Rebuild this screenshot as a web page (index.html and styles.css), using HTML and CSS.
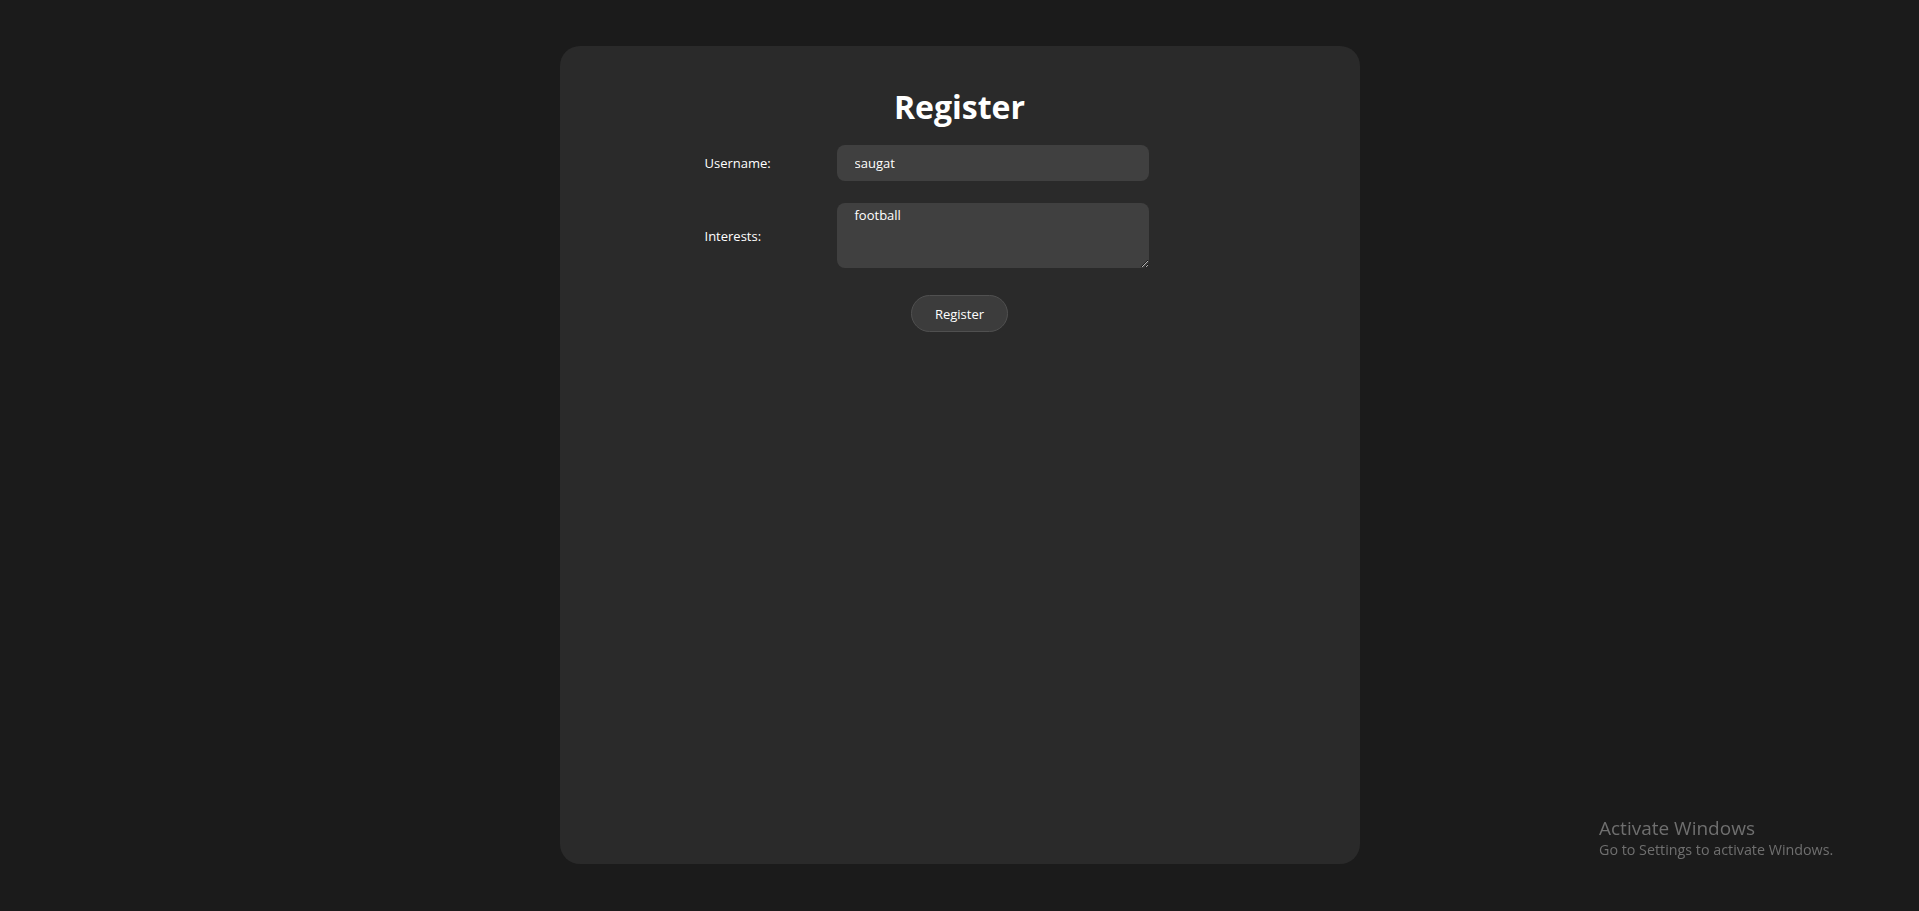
FILE: index.html
```html
<!DOCTYPE html>
<html lang="en">

<head>
    <meta charset="UTF-8">
    <meta name="viewport" content="width=device-width, initial-scale=1.0">
    <title>Register</title>
    <link rel="stylesheet" href="styles.css">
</head>

<body>
    <div class="container">
        <h1>Register</h1>

        <form class="register-form">
            <label for="username">Username:</label>
            <input type="text" id="username" name="username" value="saugat">

            <label for="interests">Interests:</label>
            <textarea id="interests" name="interests">football</textarea>

            <button type="submit">Register</button>
        </form>
    </div>

    <div class="activate">
        <div class="activate-title">Activate Windows</div>
        <div class="activate-text">Go to Settings to activate Windows.</div>
    </div>
</body>

</html>
```

FILE: styles.css
```css
body {
    font-family: 'Segoe UI', 'Open Sans', sans-serif;
    background-color: #1b1b1b;
    color: #ffffff;
    margin: 0;
    padding: 46px 0 47px;
    display: flex;
    justify-content: center;
    box-sizing: border-box;
    height: 100vh;
}

.container {
    background-color: #2a2a2a;
    border-radius: 20px;
    width: 800px;
    padding: 41px 0 24px;
    box-sizing: border-box;
}

h1 {
    text-align: center;
    font-size: 32px;
    font-weight: 700;
    margin: 0 0 18px;
    line-height: 40px;
}

.register-form {
    display: grid;
    grid-template-columns: 132px 312px;
    justify-content: center;
    align-items: center;
    row-gap: 22px;
    padding-right: 66px;
}

label {
    font-size: 13px;
}

input[type="text"],
textarea {
    font-family: inherit;
    font-size: 13px;
    color: #ffffff;
    background-color: #404040;
    border: none;
    border-radius: 8px;
    padding: 0 18px;
    box-sizing: border-box;
    width: 100%;
    outline: none;
}

input[type="text"] {
    height: 36px;
}

textarea {
    height: 65px;
    padding-top: 3px;
    resize: vertical;
}

button {
    grid-column: 1 / -1;
    justify-self: center;
    margin-left: 66px;
    margin-top: 5px;
    font-family: inherit;
    font-size: 13px;
    color: #ffffff;
    background-color: #3c3c3c;
    border: 1px solid #505050;
    border-radius: 20px;
    width: 97px;
    height: 37px;
    cursor: pointer;
}

.activate {
    position: fixed;
    left: 1599px;
    bottom: 51px;
    color: #6f6f6f;
}

.activate-title {
    font-size: 19px;
    line-height: 24px;
}

.activate-text {
    font-size: 14.3px;
    line-height: 20px;
}
```
